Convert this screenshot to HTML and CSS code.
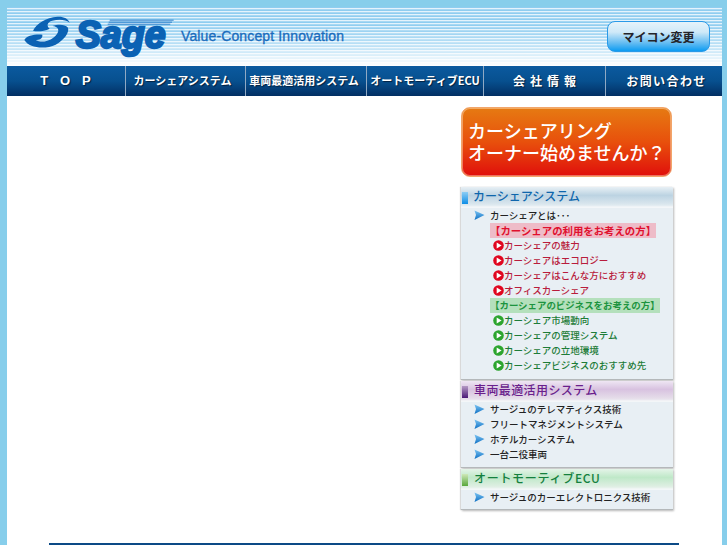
FILE: index.html
```html
<!DOCTYPE html>
<html lang="ja">
<head>
    <meta charset="UTF-8">
    <meta name="viewport" content="width=device-width, initial-scale=1.0">
    <title>Sage</title>
    <link rel="stylesheet" href="styles.css">
</head>
<body>
    <svg class="icon-defs" width="0" height="0">
        <defs>
            <linearGradient id="arrow-fill" x1="0" y1="0" x2="0" y2="1">
                <stop offset="0" stop-color="#7cc4f2"/>
                <stop offset="1" stop-color="#0d6fc4"/>
            </linearGradient>
        </defs>
        <symbol id="arrow" viewBox="0 0 11 11"><path d="M0.5 0.5 L10.5 5 L0.5 10 L2 5 Z" fill="url(#arrow-fill)"/></symbol>
        <symbol id="dot" viewBox="0 0 11 11"><circle cx="5.5" cy="5.5" r="5.3" fill="currentColor"/><path d="M3.7 2.6 L8.6 5.5 L3.7 8.4 Z" fill="#fff"/></symbol>
    </svg>
    <div class="container">
        <header class="header">
            <svg class="logo" width="165" height="50" viewBox="0 0 495 150">
                <path d="M28 90 C34 76 62 72 82 74 C84 86 72 90 62 90 C84 102 114 90 126 72 C134 60 130 50 112 48 C128 42 150 42 158 52 C166 66 146 92 122 104 C92 118 44 116 28 90 Z" fill="#0b62b4"/>
                <path d="M54 62 C64 42 92 22 128 20 C146 19 160 26 164 38 C150 28 132 28 112 32 C96 36 94 48 104 56 C88 64 66 66 54 62 Z" fill="#0b62b4"/>
                <text class="logo-word" x="182" y="113" textLength="270" lengthAdjust="spacingAndGlyphs">Sage</text>
                <g fill="#2f7fcb">
                    <rect x="284" y="29" width="192" height="3"/>
                    <rect x="281" y="35" width="190" height="3"/>
                    <rect x="278" y="41" width="188" height="3"/>
                </g>
            </svg>
            <span class="tagline">Value-Concept Innovation</span>
            <a class="mycom-btn" href="#">マイコン変更</a>
        </header>

        <nav class="nav">
            <a class="nav-top" href="#">TOP</a>
            <a class="nav-system" href="#">カーシェアシステム</a>
            <a class="nav-vehicle" href="#">車両最適活用システム</a>
            <a href="#">オートモーティブECU</a>
            <a class="nav-company" href="#">会社情報</a>
            <a class="nav-contact" href="#">お問い合わせ</a>
        </nav>

        <main class="main">
            <aside class="sidebar">
                <a class="owner-banner" href="#">カーシェアリング<br>オーナー始めませんか？</a>

                <section class="menu-box box-system">
                    <h2 class="menu-title title-blue">カーシェアシステム</h2>
                    <ul class="menu-list">
                        <li class="item"><svg class="arrow"><use href="#arrow"/></svg>カーシェアとは･･･</li>
                        <li class="sub-head head-red">【カーシェアの利用をお考えの方】</li>
                        <li class="sub red"><svg class="dot"><use href="#dot"/></svg>カーシェアの魅力</li>
                        <li class="sub red"><svg class="dot"><use href="#dot"/></svg>カーシェアはエコロジー</li>
                        <li class="sub red"><svg class="dot"><use href="#dot"/></svg>カーシェアはこんな方におすすめ</li>
                        <li class="sub red"><svg class="dot"><use href="#dot"/></svg>オフィスカーシェア</li>
                        <li class="sub-head head-green">【カーシェアのビジネスをお考えの方】</li>
                        <li class="sub green"><svg class="dot"><use href="#dot"/></svg>カーシェア市場動向</li>
                        <li class="sub green"><svg class="dot"><use href="#dot"/></svg>カーシェアの管理システム</li>
                        <li class="sub green"><svg class="dot"><use href="#dot"/></svg>カーシェアの立地環境</li>
                        <li class="sub green"><svg class="dot"><use href="#dot"/></svg>カーシェアビジネスのおすすめ先</li>
                    </ul>
                </section>

                <section class="menu-box box-vehicle">
                    <h2 class="menu-title title-purple">車両最適活用システム</h2>
                    <ul class="menu-list">
                        <li class="item"><svg class="arrow"><use href="#arrow"/></svg>サージュのテレマティクス技術</li>
                        <li class="item"><svg class="arrow"><use href="#arrow"/></svg>フリートマネジメントシステム</li>
                        <li class="item"><svg class="arrow"><use href="#arrow"/></svg>ホテルカーシステム</li>
                        <li class="item"><svg class="arrow"><use href="#arrow"/></svg>一台二役車両</li>
                    </ul>
                </section>

                <section class="menu-box box-ecu">
                    <h2 class="menu-title title-green">オートモーティブECU</h2>
                    <ul class="menu-list">
                        <li class="item"><svg class="arrow"><use href="#arrow"/></svg>サージュのカーエレクトロニクス技術</li>
                    </ul>
                </section>
            </aside>
            <div class="footer-bar"></div>
        </main>
    </div>
</body>
</html>
```

FILE: styles.css
```css
html, body {
    margin: 0;
    height: 545px;
    overflow: hidden;
}
body {
    background-color: #87ceeb;
    font-family: "Noto Sans CJK JP", "Liberation Sans", sans-serif;
    color: #222;
}
a {
    text-decoration: none;
    color: inherit;
}
.icon-defs {
    display: block;
    height: 0;
}
.container {
    width: 715px;
    margin-left: 7px;
    padding-top: 7px;
}

/* header */
.header {
    height: 59px;
    display: flex;
    align-items: flex-start;
    padding-left: 8px;
    box-sizing: border-box;
    background:
        linear-gradient(180deg, rgba(255,255,255,0) 30%, rgba(255,255,255,0.45) 70%, #fff 100%),
        repeating-linear-gradient(180deg, #8fcdf0 0 1px, #e4f3fc 1px 2px, #a8d8f3 2px 3px);
}
.logo {
    margin-top: 3px;
    flex: none;
}
.logo-word {
    font-family: "Liberation Sans", sans-serif;
    font-size: 116px;
    font-weight: bold;
    font-style: italic;
    fill: #0b62b4;
    stroke: #0b62b4;
    stroke-width: 7px;
}
.tagline {
    font-family: "Liberation Sans", sans-serif;
    font-size: 14px;
    letter-spacing: 0.13px;
    line-height: 16px;
    color: #1a6cbc;
    margin: 21px 0 0 1px;
    -webkit-text-stroke: 0.3px #1a6cbc;
}
.mycom-btn {
    margin: 14px 12px 0 auto;
    width: 103px;
    height: 31px;
    box-sizing: border-box;
    border: 1px solid #2a9ae8;
    border-radius: 8px;
    background: linear-gradient(180deg, #e6f3fa 0%, #cfe9f8 35%, #5cb9f2 75%, #0c9cf2 100%);
    font-size: 12px;
    font-weight: bold;
    line-height: 29px;
    text-align: center;
    color: #24242a;
}

/* nav */
.nav {
    height: 30px;
    display: grid;
    grid-template-columns: 118px 120px 121px 117px 122px 117px;
    background: #fff;
}
.nav a {
    border-left: 1px solid #8fa9c4;
    background: linear-gradient(180deg, #0b5a9f 0%, #07508f 50%, #022f63 100%);
    color: #fff;
    font-size: 11px;
    font-weight: bold;
    line-height: 29px;
    text-align: center;
    white-space: nowrap;
    text-shadow: 1px 1px 1px #02203f;
}
.nav a:first-child {
    border-left: none;
}
.nav .nav-top {
    font-family: "Liberation Sans", sans-serif;
    font-size: 13px;
    letter-spacing: 12px;
    padding-left: 11px;
}
.nav .nav-system {
    padding-right: 6px;
}
.nav .nav-vehicle {
    padding-right: 4px;
}
.nav .nav-company {
    font-size: 12px;
    letter-spacing: 5px;
    padding-left: 5px;
}
.nav .nav-contact {
    font-size: 12px;
    letter-spacing: 1.4px;
    padding-left: 5px;
}

/* main */
.main {
    height: 449px;
    box-sizing: border-box;
    padding-top: 11px;
    background: #fff;
}
.sidebar {
    width: 214px;
    height: 436px;
    margin-left: 453px;
    box-sizing: border-box;
}
.owner-banner {
    display: block;
    width: 211px;
    height: 70px;
    margin: 0 0 10px 1px;
    box-sizing: border-box;
    padding: 11px 0 0 6px;
    border: 1px solid #f2a56a;
    border-radius: 9px;
    background: linear-gradient(180deg, #e67a12 0%, #e8500c 50%, #e00f0c 100%);
    box-shadow: inset 0 0 0 1px rgba(255,230,200,0.45);
    color: #fff;
    font-size: 18px;
    font-weight: 500;
    line-height: 22px;
    white-space: nowrap;
}
.menu-box {
    background: #e8eff4;
    border-bottom: 1px solid #b4b8ba;
    box-shadow: 1px 1px 2px #b9b9b9, -1px 0 1px #dcdcdc;
    margin-left: 1px;
    margin-right: 1px;
}
.box-system {
    margin-bottom: 1px;
    padding-bottom: 4px;
}
.box-vehicle {
    margin-bottom: 1px;
    padding-bottom: 3px;
}
.box-ecu {
    padding-bottom: 2px;
}
.menu-title {
    position: relative;
    margin: 0;
    height: 21px;
    padding-left: 12px;
    font-size: 12px;
    font-weight: 500;
    line-height: 18px;
    box-sizing: border-box;
    box-shadow: inset 0 -3px 2px -1px #f4f7f9;
}
.menu-title::before {
    content: "";
    position: absolute;
    left: 1px;
    top: 5px;
    width: 6px;
    height: 12px;
}
.title-blue {
    color: #0f66ac;
    background: linear-gradient(180deg, #e8f0f5, #bcd3e2 40%, #dde8ef 85%);
}
.title-blue::before {
    background: linear-gradient(180deg, #8ccdf5, #0f8ee6);
}
.title-purple {
    color: #6a1f8c;
    letter-spacing: 0.4px;
    padding-left: 13px;
    background: linear-gradient(180deg, #eee6f3, #d8c2e0 40%, #e6dfea 85%);
}
.title-purple::before {
    background: linear-gradient(180deg, #b59ac4, #4b1a78);
}
.title-green {
    color: #14803e;
    letter-spacing: 0.7px;
    padding-left: 13px;
    background: linear-gradient(180deg, #e4f4e8, #bfe8c8 40%, #e0efe4 85%);
}
.title-green::before {
    background: linear-gradient(180deg, #cfe8b8, #5aa83c);
}
.menu-list {
    list-style: none;
    margin: 0;
    padding: 0 0 2px;
    font-size: 9.5px;
    font-weight: 500;
    line-height: 15px;
}
.item {
    display: flex;
    align-items: center;
    padding-left: 13px;
    white-space: nowrap;
}
.arrow {
    width: 11px;
    height: 11px;
    margin-right: 5px;
    flex: none;
}
.sub {
    display: flex;
    align-items: center;
    padding-left: 32px;
    white-space: nowrap;
}
.dot {
    width: 11px;
    height: 11px;
    flex: none;
}
.red {
    color: #b81c3c;
}
.green {
    color: #1d7c38;
}
.red .dot {
    color: #e0061f;
}
.green .dot {
    color: #2ca52e;
}
.sub-head {
    margin-left: 29px;
    width: fit-content;
    font-weight: bold;
    height: 15px;
    white-space: nowrap;
}
.head-red {
    color: #e0102e;
    background: #eebcc8;
    font-size: 10.4px;
}
.head-green {
    color: #1d9440;
    background: #b4e0bc;
    font-size: 9.45px;
}
.footer-bar {
    width: 630px;
    height: 2px;
    margin-left: 42px;
    background: #0c4a86;
}
```
